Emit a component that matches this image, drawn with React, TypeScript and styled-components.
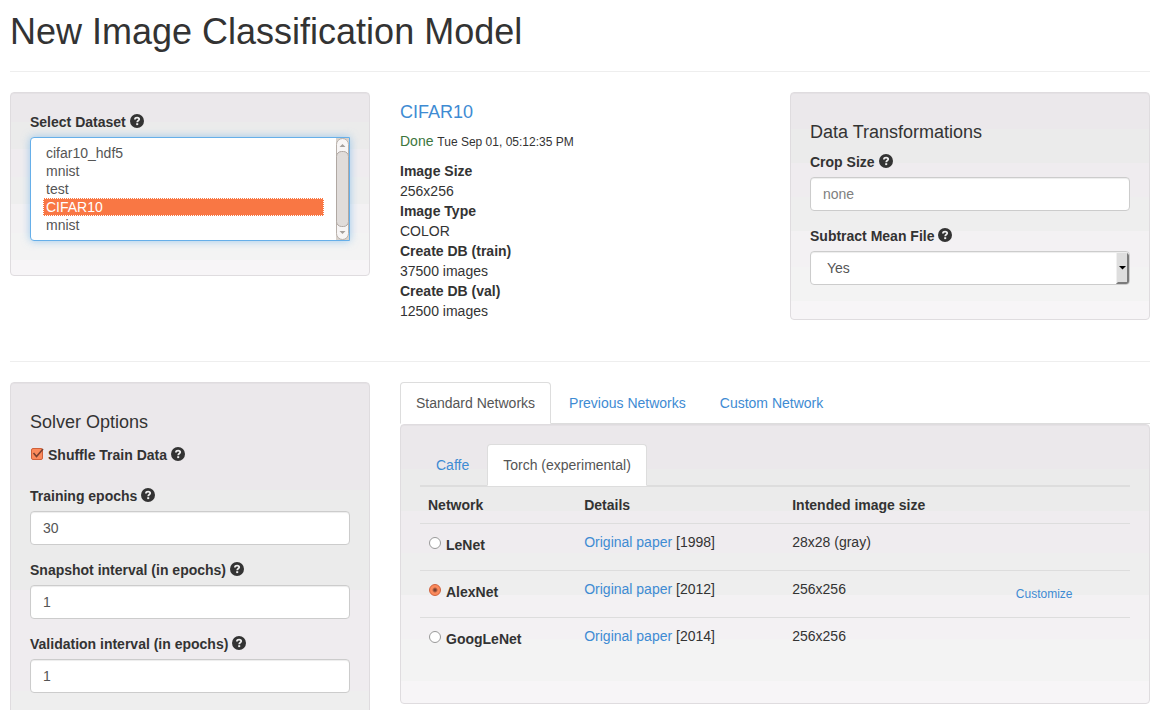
import React from "react";
import styled, { createGlobalStyle, css } from "styled-components";

const GlobalStyle = createGlobalStyle`
  *, *::before, *::after { box-sizing: border-box; }
  body {
    margin: 0;
    background: #fff;
    color: #333;
    font: 14px/20px "Liberation Sans", Arial, sans-serif;
  }
  input, select, button { font: inherit; }
`;

const Page = styled.div`
  height: 100vh;
  overflow-y: auto;
  scrollbar-width: none;
  padding: 12px 16px 0 10px;
`;

const Header = styled.header`
  padding-bottom: 19px;
  margin-bottom: 20px;
  border-bottom: 1px solid #eee;
`;

const Title = styled.h1`
  margin: 0;
  font-size: 36px;
  line-height: 40px;
  font-weight: 500;
`;

const Row = styled.div`
  display: grid;
  grid-template-columns: repeat(3, minmax(0, 1fr));
  column-gap: 30px;
  align-items: start;
`;

const Wide = styled.div`
  grid-column: span 2;
`;

const Divider = styled.hr`
  margin: 20px 0;
  border: 0;
  border-top: 1px solid #eee;
`;

const Well = styled.section<{ $minHeight?: number }>`
  padding: 19px;
  min-height: ${(p) => (p.$minHeight ? `${p.$minHeight}px` : "0")};
  border: 1px solid #dfdcdf;
  border-radius: 4px;
  box-shadow: inset 0 1px 1px rgba(0, 0, 0, 0.03);
  background: linear-gradient(
    #ebe8eb 16%,
    #ebebeb 16% 31%,
    #efecef 31% 46%,
    #eeeeee 46% 61%,
    #f3f1f3 61% 77%,
    #f3f3f3 77% 92%,
    #f7f5f7 92%
  );
`;

const Heading = styled.h4`
  margin: 10px 0;
  font-size: 18px;
  line-height: 20px;
  font-weight: 500;
`;

const Link = styled.a`
  color: #3e8bd3;
  text-decoration: none;
`;

const Field = styled.div`
  margin-bottom: 15px;
`;

const LabelRow = styled.div`
  display: flex;
  align-items: center;
  gap: 4px;
  margin-bottom: 5px;
  font-weight: 700;
  line-height: 20px;
`;

const HelpIcon = styled.svg`
  width: 14px;
  height: 14px;
  margin-bottom: 2px;
  flex: none;
`;

const control = css`
  display: block;
  width: 100%;
  height: 34px;
  padding: 6px 12px;
  color: #555;
  background: #fff;
  border: 1px solid #ccc;
  border-radius: 4px;
  box-shadow: inset 0 1px 1px rgba(0, 0, 0, 0.075);
  outline: 0;
`;

const TextInput = styled.input`
  ${control}
  &::placeholder { color: #808080; opacity: 1; }
`;

const SelectWrap = styled.div`
  position: relative;
`;

const DropDown = styled.select`
  ${control}
  padding: 6px 16px;
  appearance: none;
`;

const DropArrow = styled.svg`
  position: absolute;
  right: 1px;
  top: 1px;
  pointer-events: none;
`;

const ListFrame = styled.div`
  display: flex;
  height: 104px;
  background: #fff;
  border: 1px solid #66afe9;
  border-radius: 4px 0 0 4px;
  box-shadow: 0 0 8px rgba(102, 175, 233, 0.6);
`;

const ListBox = styled.select`
  flex: 1;
  min-width: 0;
  height: 102px;
  padding: 6px 12px;
  color: #555;
  background: transparent;
  border: 0;
  outline: 0;
  overflow: hidden;

  option {
    height: 18px;
    min-height: 18px;
    padding: 1px 3px 0;
    line-height: 17px;
  }
  option:checked {
    color: #fff;
    background: #f97744 linear-gradient(#f97744, #f97744);
    outline: 1px dotted #fff;
    outline-offset: -1px;
  }
`;

const CheckRow = styled(LabelRow)`
  padding: 3px 0 16px;
`;

const CheckMark = styled.span`
  position: relative;
  display: flex;
  width: 14px;
  height: 14px;
  margin-bottom: 3px;
  svg { position: absolute; inset: 0; pointer-events: none; }
`;

const Check = styled.input`
  appearance: none;
  width: 14px;
  height: 14px;
  margin: 0;
`;

const Summary = styled.div`
  ${Heading} { margin-bottom: 9px; }
`;

const Status = styled.p`
  margin: 0 0 9px;
  line-height: 20px;
  small { font-size: 12px; }
  span { color: #3c763d; }
`;

const Facts = styled.dl`
  margin: 0 0 20px;
  dt { font-weight: 700; }
  dd { margin: 0; }
`;

const TabList = styled.div`
  display: flex;
  gap: 2px;
  border-bottom: 1px solid #ddd;
`;

const Tab = styled.button<{ $active?: boolean }>`
  margin: 0 0 -1px;
  padding: 10px 15px;
  line-height: 20px;
  border: 1px solid transparent;
  border-radius: 4px 4px 0 0;
  background: transparent;
  color: #3e8bd3;
  ${(p) =>
    p.$active &&
    css`
      color: #555;
      background: #fff;
      border-color: #ddd #ddd transparent;
    `}
`;

const Networks = styled.table`
  width: 100%;
  margin-bottom: 20px;
  table-layout: fixed;
  border-collapse: separate;
  border-spacing: 0;
  th, td {
    padding: 8px;
    text-align: left;
    vertical-align: top;
    border-top: 1px solid #ddd;
  }
  td { height: 47px; padding-bottom: 0; }
  th:nth-child(1) { width: 22%; }
  th:nth-child(2) { width: 29.3%; }
  th:nth-child(3) { width: 31.5%; }
`;

const RadioLabel = styled.label`
  display: flex;
  align-items: center;
  gap: 4px;
  padding-top: 3px;
  font-weight: 700;
`;

const Radio = styled.input`
  appearance: none;
  width: 12px;
  height: 12px;
  margin: 0 1px 4px;
  border: 1px solid #999;
  border-radius: 50%;
  background: #fff;
  &:checked {
    border-color: #d0603a;
    background: radial-gradient(circle, #7a4030 0 1px, #fb8a5c 3px);
  }
`;

const SmallButton = styled.button`
  display: block;
  padding: 6px 0;
  border: 0;
  background: none;
  color: #3e8bd3;
  font-size: 12px;
  line-height: 18px;
`;

const ListScrollbar = () => (
  <svg width="13" height="102" viewBox="0 0 13 102" aria-hidden="true">
    <rect width="13" height="102" fill="#d8d2cc" />
    <rect x="0.5" y="0.5" width="12" height="101" rx="6" fill="#f7f5f5" stroke="#b8b0aa" />
    <rect x="0.5" y="13.5" width="12" height="75" rx="5" fill="#e0dcda" stroke="#b0a8a3" />
    <path d="M3.5 9 6.5 6 9.5 9ZM3.5 93h6l-3 3Z" fill="#a5a09c" />
  </svg>
);

const Help = () => (
  <HelpIcon viewBox="0 0 14 14" aria-hidden="true">
    <circle cx="7" cy="7" r="7" fill="#333" />
    <path
      d="M4.900 5.500C4.900 4.200 5.800 3.600 7.100 3.600S9.200 4.300 9.200 5.300C9.200 6.600 7.200 6.500 7.200 8.300"
      fill="none"
      stroke="#eee"
      strokeWidth="1.800"
    />
    <path d="M6.200 9.200h2v1.900h-2Z" fill="#eee" />
  </HelpIcon>
);

type TextFieldProps = { id: string; label: string; value?: string; placeholder?: string };

const TextField = ({ id, label, value, placeholder }: TextFieldProps) => (
  <Field>
    <LabelRow>
      <label htmlFor={id}>{label}</label>
      <Help />
    </LabelRow>
    <TextInput id={id} type="text" defaultValue={value} placeholder={placeholder} />
  </Field>
);

const facts = [
  ["Image Size", "256x256"],
  ["Image Type", "COLOR"],
  ["Create DB (train)", "37500 images"],
  ["Create DB (val)", "12500 images"],
];

const networks = [
  { name: "LeNet", year: 1998, size: "28x28 (gray)" },
  { name: "AlexNet", year: 2012, size: "256x256", selected: true },
  { name: "GoogLeNet", year: 2014, size: "256x256" },
];

export default function App() {
  return (
    <Page>
      <GlobalStyle />
      <Header>
        <Title>New Image Classification Model</Title>
      </Header>

      <Row>
        <Well>
          <Field>
            <LabelRow>
              <label htmlFor="dataset">Select Dataset</label>
              <Help />
            </LabelRow>
            <ListFrame>
              <ListBox id="dataset" size={5} defaultValue="cifar10">
                <option value="hdf5">cifar10_hdf5</option>
                <option value="mnist-a">mnist</option>
                <option value="test">test</option>
                <option value="cifar10">CIFAR10</option>
                <option value="mnist-b">mnist</option>
              </ListBox>
              <ListScrollbar />
            </ListFrame>
          </Field>
        </Well>

        <Summary>
          <Heading>
            <Link href="#cifar10">CIFAR10</Link>
          </Heading>
          <Status>
            <span>Done</span> <small>Tue Sep 01, 05:12:35 PM</small>
          </Status>
          <Facts>
            {facts.map(([term, value]) => (
              <React.Fragment key={term}>
                <dt>{term}</dt>
                <dd>{value}</dd>
              </React.Fragment>
            ))}
          </Facts>
        </Summary>

        <Well>
          <Heading>Data Transformations</Heading>
          <TextField id="crop" label="Crop Size" placeholder="none" />
          <Field>
            <LabelRow>
              <label htmlFor="mean">Subtract Mean File</label>
              <Help />
            </LabelRow>
            <SelectWrap>
              <DropDown id="mean" defaultValue="yes">
                <option value="yes">Yes</option>
                <option value="no">No</option>
              </DropDown>
              <DropArrow width="13" height="32" viewBox="0 0 13 32" aria-hidden="true">
                <path d="M0 1h10q3 0 3 3v25q0 3-3 3H0Z" fill="#dedede" />
                <path d="M0 1h1v30H0Z" fill="#f0f0f0" />
                <path d="M11 1q2 1 2 3v25q0 3-3 3H0l2-2h9Z" fill="#7b7b7b" />
                <path d="M3 14h7l-3.5 3.5Z" fill="#000" />
              </DropArrow>
            </SelectWrap>
          </Field>
        </Well>
      </Row>

      <Divider />

      <Row>
        <Well $minHeight={671}>
          <Heading>Solver Options</Heading>
          <CheckRow>
            <CheckMark>
              <Check id="shuffle" type="checkbox" defaultChecked />
              <svg width="14" height="14" viewBox="0 0 14 14" aria-hidden="true">
                <rect x="1.5" y="1.5" width="11" height="11" rx="1.5" fill="#fb8a5c" stroke="#d0603a" />
                <path d="M3.500 6 6.500 9.500 13 2" fill="none" stroke="#7a4030" strokeWidth="1.600" />
              </svg>
            </CheckMark>
            <label htmlFor="shuffle">Shuffle Train Data</label>
            <Help />
          </CheckRow>
          <TextField id="epochs" label="Training epochs" value="30" />
          <TextField id="snapshot" label="Snapshot interval (in epochs)" value="1" />
          <TextField id="validation" label="Validation interval (in epochs)" value="1" />
        </Well>

        <Wide>
          <TabList role="tablist">
            <Tab role="tab" aria-selected="true" $active>Standard Networks</Tab>
            <Tab role="tab" aria-selected="false">Previous Networks</Tab>
            <Tab role="tab" aria-selected="false">Custom Network</Tab>
          </TabList>
          <Well>
            <TabList role="tablist">
              <Tab role="tab" aria-selected="false">Caffe</Tab>
              <Tab role="tab" aria-selected="true" $active>Torch (experimental)</Tab>
            </TabList>
            <Networks>
              <thead>
                <tr>
                  <th>Network</th>
                  <th>Details</th>
                  <th>Intended image size</th>
                  <th aria-label="Actions" />
                </tr>
              </thead>
              <tbody>
                {networks.map((n) => (
                  <tr key={n.name}>
                    <td>
                      <RadioLabel>
                        <Radio type="radio" name="network" defaultChecked={n.selected} />
                        {n.name}
                      </RadioLabel>
                    </td>
                    <td>
                      <Link href={`#${n.name}`}>Original paper</Link> [{n.year}]
                    </td>
                    <td>{n.size}</td>
                    <td>{n.selected && <SmallButton type="button">Customize</SmallButton>}</td>
                  </tr>
                ))}
              </tbody>
            </Networks>
          </Well>
        </Wide>
      </Row>
    </Page>
  );
}
